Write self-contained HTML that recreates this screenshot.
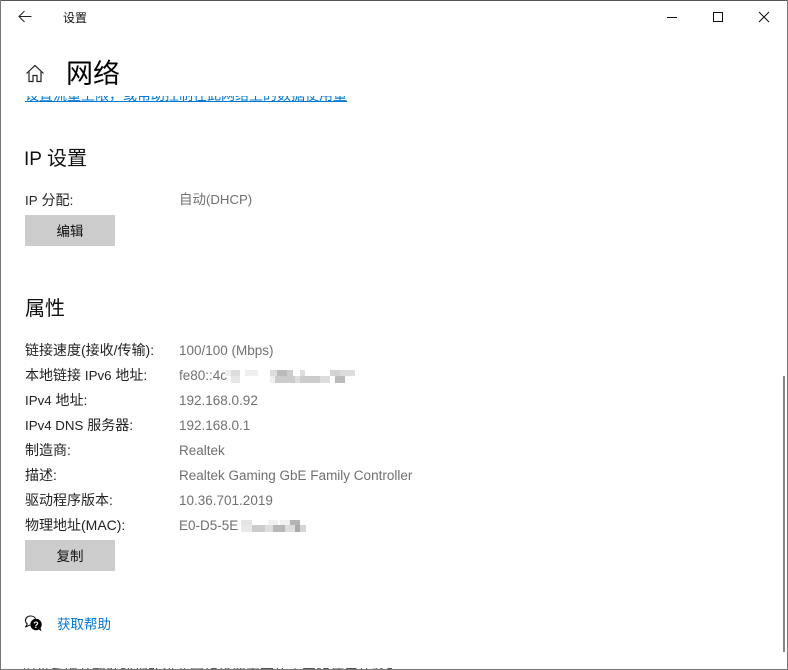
<!DOCTYPE html>
<html lang="zh-CN">
<head>
<meta charset="utf-8">
<style>
html,body{margin:0;padding:0;width:788px;height:670px;overflow:hidden;background:#fff}
body{position:relative;font-family:"Liberation Sans","Noto Sans CJK SC",sans-serif;font-size:14px;color:#000}
.a{position:absolute;white-space:nowrap}
.l{left:25px;color:#222;line-height:20px;font-size:14px}
.l span{font-size:13.3px}
.v{left:179px;color:#707070;line-height:20px;font-size:13.5px}
.btn{position:absolute;left:25px;width:90px;height:31px;background:#ccc;text-align:center;line-height:33px;font-size:13.5px;color:#111}
.h{font-size:20px;line-height:28px;color:#111}
</style>
</head>
<body>
<div class="a" style="left:25px;top:96px;width:323px;height:7px;overflow:hidden"><div class="a" style="left:0;top:-11px;color:#0078d4;font-size:14px;line-height:20px;text-decoration:underline">设置流量上限，或帮助控制在此网络上的数据使用量</div></div>

<svg class="a" style="left:18px;top:10px" width="14" height="14" viewBox="0 0 14 14" fill="none" stroke="#222" stroke-width="1"><path d="M1 6.5H13.5M6.5 1L1 6.5L6.5 12"/></svg>
<div class="a" style="left:63px;top:9px;font-size:12px;line-height:18px;color:#111">设置</div>

<svg class="a" style="left:667px;top:11px" width="103" height="14" viewBox="0 0 103 14" fill="none" stroke="#111" stroke-width="1"><path d="M0 6.5H10"/><rect x="46.5" y="1.5" width="9" height="9"/><path d="M92 1L102 11M102 1L92 11"/></svg>

<svg class="a" style="left:25px;top:64px" width="20" height="19" viewBox="0 0 20 19" fill="none" stroke="#222" stroke-width="1.2"><path d="M1.5 9.5L10 1.5L18.5 9.5M4 7.5V17.5H8V11.5H12V17.5H16V7.5"/></svg>
<div class="a" style="left:66px;top:55px;font-size:27px;line-height:38px;color:#000">网络</div>

<div class="a h" style="left:24px;top:145px"><span style="font-size:19px">IP</span><span style="margin-left:5px">设置</span></div>
<div class="a l" style="top:190px"><span>IP</span> 分配:</div>
<div class="a v" style="top:190px">自动<span style="font-size:13.2px">(DHCP)</span></div>
<div class="btn" style="top:215px">编辑</div>

<div class="a h" style="left:25px;top:295px">属性</div>
<div class="a l" style="top:340px">链接速度(接收/传输):</div>
<div class="a v" style="top:341px">100/100 (Mbps)</div>
<div class="a l" style="top:365px">本地链接 <span>IPv6</span> 地址:</div>
<div class="a v" style="top:366px">fe80::4c</div>
<div class="a l" style="top:390px"><span>IPv4</span> 地址:</div>
<div class="a v" style="top:391px">192.168.0.92</div>
<div class="a l" style="top:415px"><span>IPv4 DNS</span> 服务器:</div>
<div class="a v" style="top:416px">192.168.0.1</div>
<div class="a l" style="top:440px">制造商:</div>
<div class="a v" style="top:441px">Realtek</div>
<div class="a l" style="top:465px">描述:</div>
<div class="a v" style="top:466px">Realtek Gaming GbE Family Controller</div>
<div class="a l" style="top:490px">驱动程序版本:</div>
<div class="a v" style="top:491px">10.36.701.2019</div>
<div class="a l" style="top:515px">物理地址(MAC):</div>
<div class="a v" style="top:516px">E0-D5-5E</div>
<div class="btn" style="top:540px">复制</div>

<svg class="a" style="left:225px;top:367px" width="132" height="16" viewBox="0 0 132 16" shape-rendering="crispEdges">
<rect x="0" y="3" width="6" height="6" fill="#eee"/><rect x="6" y="3" width="9" height="6" fill="#ddd"/><rect x="6" y="9" width="9" height="7" fill="#e6e6e6"/><rect x="20" y="3" width="13" height="6" fill="#eee"/>
<rect x="45" y="3" width="7" height="6" fill="#ddd"/><rect x="52" y="3" width="10" height="6" fill="#bbb"/><rect x="62" y="3" width="6" height="6" fill="#ccc"/><rect x="75" y="3" width="5" height="6" fill="#ddd"/><rect x="105" y="3" width="10" height="6" fill="#d4d4d4"/><rect x="115" y="3" width="15" height="6" fill="#ddd"/>
<rect x="45" y="9" width="5" height="7" fill="#eee"/><rect x="50" y="9" width="20" height="7" fill="#ccc"/><rect x="70" y="9" width="5" height="7" fill="#ddd"/><rect x="75" y="9" width="20" height="7" fill="#ccc"/><rect x="95" y="9" width="10" height="7" fill="#ddd"/><rect x="110" y="9" width="10" height="7" fill="#bbb"/>
</svg>
<svg class="a" style="left:238px;top:518px" width="70" height="16" viewBox="0 0 70 16" shape-rendering="crispEdges">
<rect x="3" y="2" width="11" height="5" fill="#e4e4e4"/><rect x="30" y="2" width="10" height="5" fill="#f0f0f0"/><rect x="42" y="2" width="10" height="5" fill="#f0f0f0"/><rect x="52" y="2" width="10" height="5" fill="#b4b4b4"/>
<rect x="3" y="7" width="11" height="7" fill="#e8e8e8"/><rect x="14" y="7" width="13" height="7" fill="#ccc"/><rect x="27" y="7" width="8" height="7" fill="#ddd"/><rect x="35" y="7" width="12" height="7" fill="#b8b8b8"/><rect x="47" y="7" width="10" height="7" fill="#ddd"/><rect x="57" y="7" width="5" height="7" fill="#aaa"/><rect x="62" y="7" width="6" height="7" fill="#d4d4d4"/>
</svg>

<svg class="a" style="left:24px;top:615px" width="19" height="18" viewBox="0 0 19 18"><path d="M6.5 1C3.5 1 1.5 3 1.5 5.5C1.5 7 2.2 8.2 3.3 9L1.5 12L6 10" fill="#fff" stroke="#111" stroke-width="1.1" stroke-linejoin="round"/><path d="M6.5 1C9 1 11 2.3 11.5 4" fill="none" stroke="#111" stroke-width="1.1"/><circle cx="12" cy="9.5" r="5.7" fill="#000"/><path d="M14.5 14L17.5 16.5L16 11.5Z" fill="#000"/><text x="12" y="13" font-size="9" font-weight="bold" fill="#fff" text-anchor="middle" font-family="Liberation Sans">?</text></svg>
<div class="a" style="left:57px;top:615px;font-size:13.5px;line-height:20px;color:#0078d4">获取帮助</div>

<div class="a" style="left:22px;top:668px;width:370px;height:1px;overflow:hidden"><div class="a" style="left:0;top:-4px;font-size:14px;line-height:20px;color:#555">提供反馈并帮助我们改进此网络设置页面的内容和使用体验了解详情</div></div>

<div class="a" style="left:783px;top:376px;width:2px;height:276px;background:#858585"></div>
<div class="a" style="left:0;top:0;width:788px;height:1px;background:#555"></div>
<div class="a" style="left:0;top:669px;width:788px;height:1px;background:#777"></div>
<div class="a" style="left:0;top:0;width:1px;height:670px;background:#777"></div>
<div class="a" style="left:787px;top:0;width:1px;height:670px;background:#777"></div>
</body>
</html>
